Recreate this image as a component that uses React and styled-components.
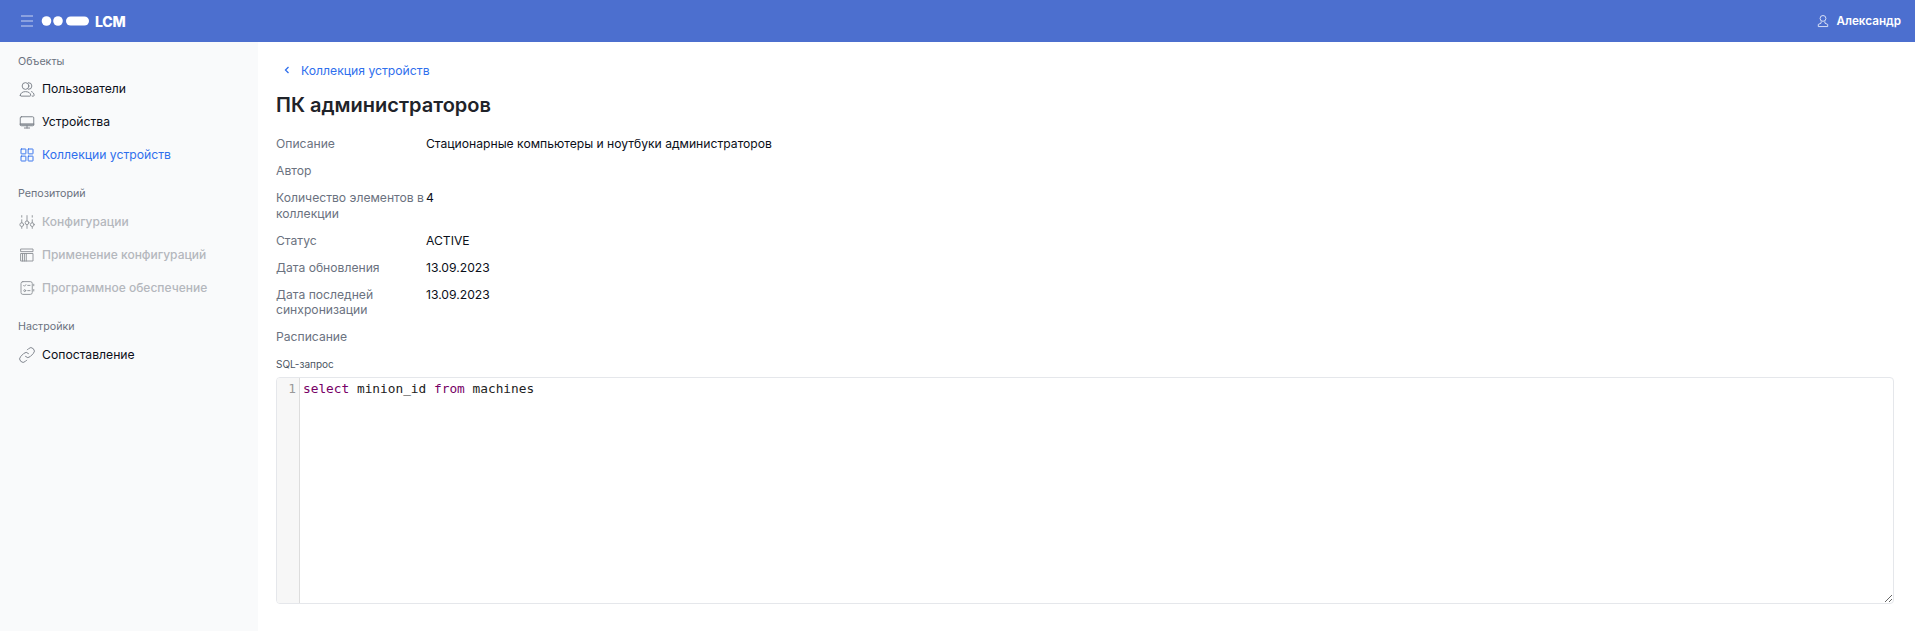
import React from 'react';
import styled, { createGlobalStyle } from 'styled-components';

const Global = createGlobalStyle`
  html, body { margin: 0; padding: 0; background: #fff; }
  body { font-family: Inter, "Noto Sans", sans-serif; font-size: 12px; color: #000; }
  * { box-sizing: border-box; }
`;
const Page = styled.div`display:flex;flex-direction:column;height:631px;overflow:hidden;`;
const Header = styled.header`height:42px;flex:none;background:#4c6fcf;display:flex;align-items:center;padding:0 14px 0 20px;color:#fff;`;
const Burger = styled.svg`width:14px;height:14px;margin-right:7px;`;
const Logo = styled.svg`width:48px;height:12px;margin-right:6px;`;
const Brand = styled.span`font-weight:800;font-size:14px;letter-spacing:-.2px;`;
const User = styled.div`margin-left:auto;display:flex;align-items:center;gap:8px;font-weight:600;font-size:11.7px;`;
const Body = styled.div`flex:1;display:flex;min-height:0;`;
const Sidebar = styled.aside`width:258px;flex:none;background:#f9fafb;padding:12px 18px 0;`;
const Section = styled.div`font-size:10.7px;line-height:16px;color:#6b7280;margin:15px 0 3px;&:first-child{margin:0 0 2px;}`;
const Item = styled.div`display:flex;align-items:center;gap:6px;height:33px;
  font-size:${p => p.$state === 'disabled' ? '12px' : '12.2px'};
  font-weight:${p => p.$state === 'disabled' ? 500 : 400};
  color:${p => p.$state === 'active' ? '#2f6fed' : p.$state === 'disabled' ? '#b4b7bd' : '#0b0f19'};
  svg{width:18px;height:18px;flex:none;color:${p => p.$state === 'active' ? '#2f6fed' : p.$state === 'disabled' ? '#8f9399' : '#7a7f87'};}`;
const Main = styled.main`flex:1;min-width:0;padding:20px 21px 0 18px;`;
const Back = styled.div`display:flex;align-items:center;height:16px;color:#2f6fed;font-size:12.2px;margin-left:6px;svg{width:10px;height:10px;margin-right:9px;}`;
const Title = styled.h1`margin:12px 0 16px;font-size:20px;line-height:30px;font-weight:600;color:#1f2329;`;
const Fields = styled.div`display:grid;grid-template-columns:150px 1fr;row-gap:11.5px;font-size:12.15px;line-height:15.5px;`;
const Label = styled.div`color:#6b7280;`;
const Value = styled.div`color:#0b0f19;`;
const SqlLabel = styled.div`font-size:10px;line-height:14px;color:#4b5563;margin:12px 0 6px;`;
const Editor = styled.div`height:227px;display:flex;border:1px solid #e5e7eb;border-radius:4px;overflow:auto;resize:both;width:100%;`;
const Gutter = styled.div`width:23px;flex:none;background:#f7f7f7;border-right:1px solid #ddd;text-align:right;padding:3px 3px 0 0;color:#999;font:12.8px/16px "DejaVu Sans Mono",monospace;`;
const Code = styled.pre`margin:0;padding:3px 0 0 3px;font:12.8px/16px "DejaVu Sans Mono",monospace;color:#222;`;
const Kw = styled.span`color:#770066;`;

const S = { fill:'none', stroke:'currentColor', strokeWidth:1.25, strokeLinecap:'round', strokeLinejoin:'round' };
const Ico = ({ children }) => <svg viewBox="0 0 24 24" {...S}>{children}</svg>;

export default function App() {
  return (
    <Page>
      <Global />
      <Header>
        <Burger viewBox="0 0 14 14" fill="none" stroke="#c9d4f1" strokeWidth="1"><path d="M1 2h12M1 7h12M1 12h12" /></Burger>
        <Logo viewBox="0 0 48 12" fill="#fff"><circle cx="5.5" cy="6" r="4.8" /><circle cx="17" cy="6" r="4.8" /><rect x="25" y="1.4" width="23" height="9.2" rx="4.6" /></Logo>
        <Brand>LCM</Brand>
        <User>
          <svg width="12" height="14" viewBox="0 0 14 16" fill="none" stroke="#dfe6f8" strokeWidth="1.1"><circle cx="7" cy="5" r="3.4" /><path d="M4.8 8.5v2L1.5 12v2.5h11V12l-3.3-1.5v-2" /></svg>
          Александр
        </User>
      </Header>
      <Body>
        <Sidebar>
          <Section>Объекты</Section>
          <Item><Ico><circle cx="10" cy="8" r="4.5"/><path d="M3 20.5c0-3 3-5 7-5s7 2 7 5c0 .5-.5 1-1 1H4c-.5 0-1-.5-1-1zM14 3.5a4.5 4.5 0 0 1 0 9M18 15.5c2 .8 3.5 2.5 3.5 5 0 .5-.5 1-1 1H19"/></Ico>Пользователи</Item>
          <Item><Ico><rect x="3" y="5" width="18" height="12" rx="1.5"/><path d="M3 14.5h18M3 15.7h18M12 17v3M8.5 20h7"/></Ico>Устройства</Item>
          <Item $state="active"><Ico><rect x="4" y="4" width="6.5" height="6.5" rx=".5"/><rect x="13.5" y="4" width="6.5" height="6.5" rx=".5"/><rect x="4" y="13.5" width="6.5" height="6.5" rx=".5"/><rect x="13.5" y="13.5" width="6.5" height="6.5" rx=".5"/></Ico>Коллекции устройств</Item>
          <Section>Репозиторий</Section>
          <Item $state="disabled"><Ico><path d="M5 3.5v2M5 9v4M12 3.5v7M19 3.5v2M19 9v4M5 18.5v2M12 16v4.5M19 18.5v2"/><circle cx="5" cy="15.5" r="2.5"/><circle cx="12" cy="13" r="2.5"/><circle cx="19" cy="15.5" r="2.5"/></Ico>Конфигурации</Item>
          <Item $state="disabled"><Ico><rect x="4" y="4" width="16" height="3.5"/><rect x="4" y="10" width="16" height="10"/><path d="M11 10v10M6 10v10M8.5 10v10"/></Ico>Применение конфигураций</Item>
          <Item $state="disabled"><Ico><rect x="4" y="3.5" width="15" height="17" rx="2.5"/><path d="M7.5 8.5l1.2 1.2L10.5 7.5M13 8.5h3M13 15.5h3M21 7v2M21 14v2"/><circle cx="9" cy="15.5" r="1.3"/></Ico>Программное обеспечение</Item>
          <Section>Настройки</Section>
          <Item><Ico><path d="M10 14a4.5 4.5 0 0 0 6.4 0l4-4A4.5 4.5 0 0 0 14 3.6l-1.5 1.5"/><path d="M14 10a4.5 4.5 0 0 0-6.4 0l-4 4a4.5 4.5 0 0 0 6.4 6.4l1.5-1.5"/></Ico>Сопоставление</Item>
        </Sidebar>
        <Main>
          <Back><svg viewBox="0 0 10 10" fill="none" stroke="currentColor" strokeWidth="1.3"><path d="M6.5 2 3.5 5l3 3"/></svg>Коллекция устройств</Back>
          <Title>ПК администраторов</Title>
          <Fields>
            <Label>Описание</Label><Value>Стационарные компьютеры и ноутбуки администраторов</Value>
            <Label>Автор</Label><Value />
            <Label>Количество элементов в коллекции</Label><Value>4</Value>
            <Label>Статус</Label><Value>ACTIVE</Value>
            <Label>Дата обновления</Label><Value>13.09.2023</Value>
            <Label>Дата последней синхронизации</Label><Value>13.09.2023</Value>
            <Label>Расписание</Label><Value />
          </Fields>
          <SqlLabel>SQL-запрос</SqlLabel>
          <Editor>
            <Gutter>1</Gutter>
            <Code><Kw>select</Kw> minion_id <Kw>from</Kw> machines</Code>
          </Editor>
        </Main>
      </Body>
    </Page>
  );
}
